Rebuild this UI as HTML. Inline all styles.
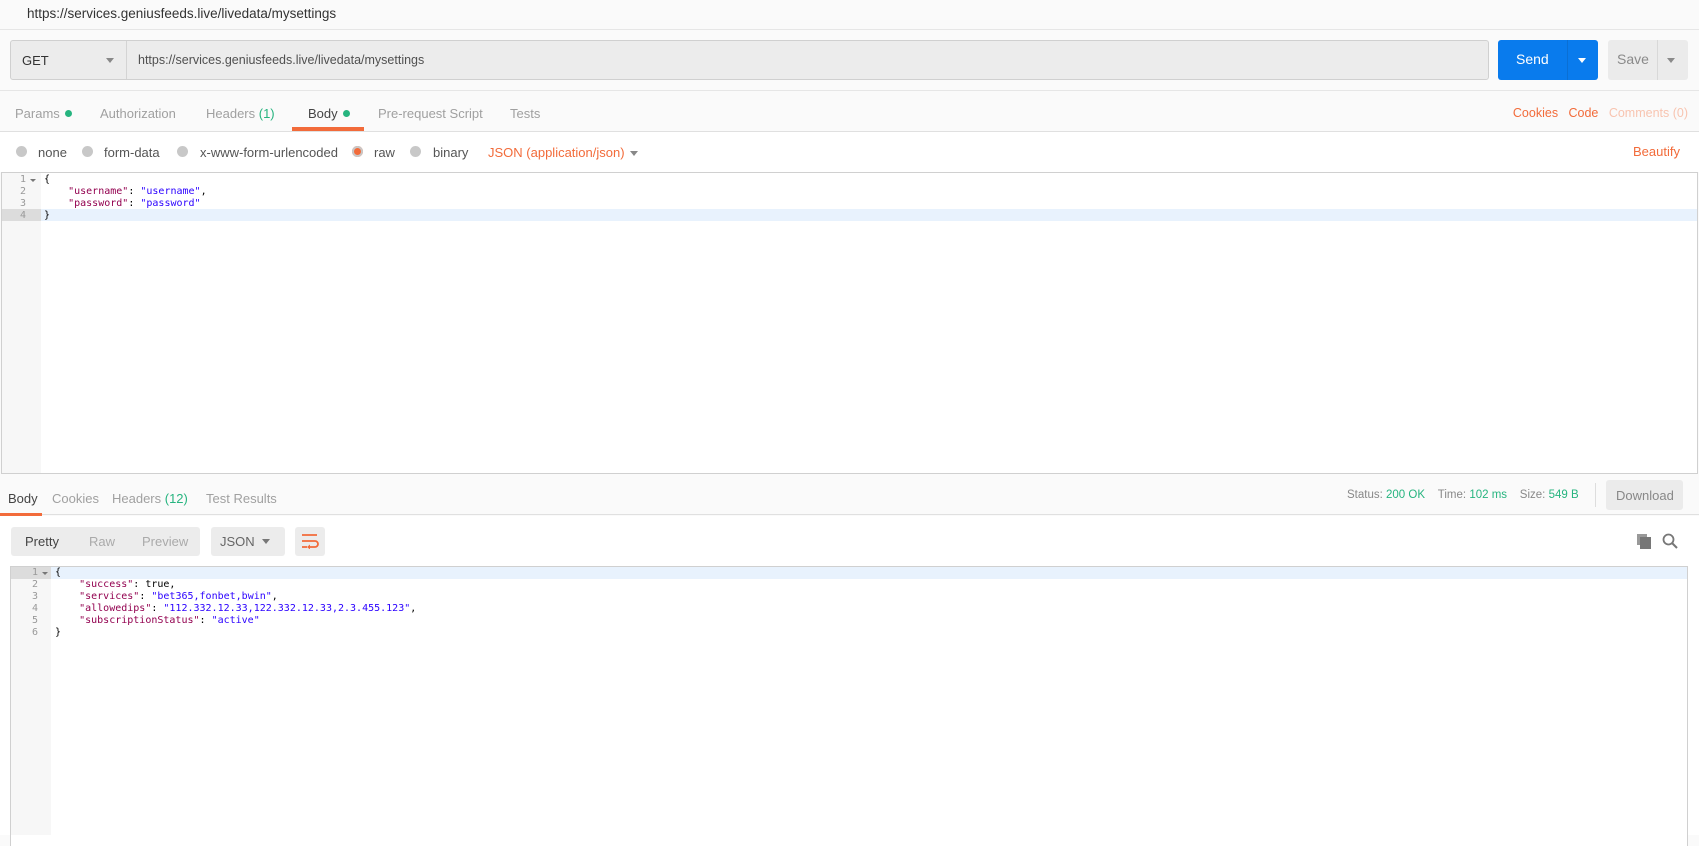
<!DOCTYPE html>
<html><head><meta charset="utf-8"><style>
*{box-sizing:border-box;margin:0;padding:0}
body{width:1699px;height:835px;overflow:hidden;background:#fafafa;font-family:"Liberation Sans",sans-serif;font-size:13px;color:#808080;position:relative}
.a{position:absolute;white-space:nowrap}
.g{color:#26b47f}
.o{color:#f26b3a}
.dot{display:inline-block;width:7px;height:7px;border-radius:50%;background:#26b47f;margin-left:5px;vertical-align:1px}
.radio{position:absolute;width:11px;height:11px;border-radius:50%;background:#c8c8c8;top:146px}
.code{font-family:"DejaVu Sans Mono","Liberation Mono",monospace;font-size:10px;line-height:12px;color:#000}
.k{color:#92004f}.s{color:#2a00ff}
.ln{font-family:"DejaVu Sans Mono",monospace;font-size:10px;line-height:12px;color:#999;text-align:right}
</style></head><body>
<div class="a" style="left:0;top:0;width:1699px;height:30px;background:#fafafa;border-bottom:1px solid #e6e6e6"></div>
<div class="a" style="left:27px;top:6px;font-size:13.5px;color:#333">https://services.geniusfeeds.live/livedata/mysettings</div>

<div class="a" style="left:10px;top:40px;width:1479px;height:40px;background:#ececec;border:1px solid #d0d0d0;border-radius:3px"></div>
<div class="a" style="left:126px;top:41px;width:1px;height:38px;background:#d4d4d4"></div>
<div class="a" style="left:22px;top:53px;font-size:13px;color:#333">GET</div>
<div class="a" style="left:106px;top:58px;width:0;height:0;border-left:4px solid transparent;border-right:4px solid transparent;border-top:5px solid #888"></div>
<div class="a" style="left:138px;top:53px;font-size:12.5px;color:#505050">https://services.geniusfeeds.live/livedata/mysettings</div>

<div class="a" style="left:1498px;top:40px;width:100px;height:40px;background:#097bed;border-radius:3px"></div>
<div class="a" style="left:1567px;top:40px;width:1px;height:40px;background:#0a6fd4"></div>
<div class="a" style="left:1516px;top:51px;font-size:14px;color:#fff">Send</div>
<div class="a" style="left:1578px;top:58px;border-left:4px solid transparent;border-right:4px solid transparent;border-top:5px solid #fff"></div>
<div class="a" style="left:1608px;top:40px;width:80px;height:40px;background:#ebebeb;border-radius:3px"></div>
<div class="a" style="left:1657px;top:40px;width:1px;height:40px;background:#d8d8d8"></div>
<div class="a" style="left:1617px;top:51px;font-size:14px;color:#8a8a8a">Save</div>
<div class="a" style="left:1667px;top:58px;border-left:4px solid transparent;border-right:4px solid transparent;border-top:5px solid #8a8a8a"></div>

<div class="a" style="left:0;top:90px;width:1699px;height:1px;background:#e6e6e6"></div>
<div class="a" style="left:15px;top:106px;color:#a0a0a0">Params<span class="dot"></span></div>
<div class="a" style="left:100px;top:106px;color:#a0a0a0">Authorization</div>
<div class="a" style="left:206px;top:106px;color:#a0a0a0">Headers <span class="g">(1)</span></div>
<div class="a" style="left:308px;top:106px;color:#444">Body<span class="dot"></span></div>
<div class="a" style="left:292px;top:127px;width:72px;height:4px;background:#f26b3a"></div>
<div class="a" style="left:378px;top:106px;color:#a0a0a0">Pre-request Script</div>
<div class="a" style="left:510px;top:106px;color:#a0a0a0">Tests</div>
<div class="a" style="right:11px;top:106px;font-size:12.5px"><span class="o">Cookies</span>&nbsp;&nbsp;&nbsp;<span class="o">Code</span>&nbsp;&nbsp;&nbsp;<span style="color:#f8c4b0">Comments (0)</span></div>
<div class="a" style="left:0;top:131px;width:1699px;height:1px;background:#e0e0e0"></div>
<div class="a" style="left:0;top:132px;width:1699px;height:40px;background:#fff"></div>

<div class="radio" style="left:16px"></div><div class="a" style="left:38px;top:145px;color:#555">none</div>
<div class="radio" style="left:82px"></div><div class="a" style="left:104px;top:145px;color:#555">form-data</div>
<div class="radio" style="left:177px"></div><div class="a" style="left:200px;top:145px;color:#555">x-www-form-urlencoded</div>
<div class="radio" style="left:352px;background:#f26b3a;box-shadow:inset 0 0 0 2px #c8c8c8"></div><div class="a" style="left:374px;top:145px;color:#555">raw</div>
<div class="radio" style="left:410px"></div><div class="a" style="left:433px;top:145px;color:#555">binary</div>
<div class="a o" style="left:488px;top:145px">JSON (application/json)</div>
<div class="a" style="left:630px;top:151px;border-left:4px solid transparent;border-right:4px solid transparent;border-top:5px solid #888"></div>
<div class="a o" style="left:1633px;top:144px">Beautify</div>

<div class="a" style="left:1px;top:172px;width:1697px;height:302px;background:#fff;border:1px solid #d0d0d0"></div>
<div class="a" style="left:2px;top:173px;width:39px;height:300px;background:#f7f7f7"></div>
<div class="a" style="left:41px;top:209px;width:1656px;height:12px;background:#e8f2fd"></div>
<div class="a" style="left:2px;top:209px;width:39px;height:12px;background:#dcdcdc"></div>
<div class="a ln" style="left:2px;top:174px;width:24px">1<br>2<br>3<br>4</div>
<div class="a" style="left:30px;top:179px;border-left:3px solid transparent;border-right:3px solid transparent;border-top:3px solid #777"></div>
<div class="a code" style="left:44px;top:174px">{<br>&nbsp;&nbsp;&nbsp;&nbsp;<span class="k">"username"</span>: <span class="s">"username"</span>,<br>&nbsp;&nbsp;&nbsp;&nbsp;<span class="k">"password"</span>: <span class="s">"password"</span><br>}</div>

<div class="a" style="left:0;top:475px;width:1699px;height:40px;background:#fafafa;border-bottom:1px solid #e0e0e0"></div>
<div class="a" style="left:8px;top:491px;color:#444">Body</div>
<div class="a" style="left:0;top:513px;width:42px;height:3px;background:#f26b3a"></div>
<div class="a" style="left:52px;top:491px;color:#a0a0a0">Cookies</div>
<div class="a" style="left:112px;top:491px;color:#a0a0a0">Headers <span class="g">(12)</span></div>
<div class="a" style="left:206px;top:491px;color:#a0a0a0">Test Results</div>
<div class="a" style="left:1347px;top:489px;font-size:11.5px;color:#888">Status:&nbsp;<span class="g">200 OK</span>&nbsp;&nbsp;&nbsp;&nbsp;Time:&nbsp;<span class="g">102 ms</span>&nbsp;&nbsp;&nbsp;&nbsp;Size:&nbsp;<span class="g">549 B</span></div>
<div class="a" style="left:1595px;top:483px;width:1px;height:24px;background:#ddd"></div>
<div class="a" style="left:1606px;top:480px;width:77px;height:30px;background:#ebebeb;border-radius:3px"></div>
<div class="a" style="left:1616px;top:488px;color:#888">Download</div>

<div class="a" style="left:0;top:516px;width:1699px;height:319px;background:#fff"></div>
<div class="a" style="left:11px;top:527px;width:189px;height:29px;background:#ececec;border-radius:3px"></div>
<div class="a" style="left:25px;top:534px;color:#444">Pretty</div>
<div class="a" style="left:89px;top:534px;color:#aaa">Raw</div>
<div class="a" style="left:142px;top:534px;color:#aaa">Preview</div>
<div class="a" style="left:211px;top:527px;width:74px;height:29px;background:#ececec;border-radius:3px"></div>
<div class="a" style="left:220px;top:534px;color:#666">JSON</div>
<div class="a" style="left:262px;top:539px;border-left:4px solid transparent;border-right:4px solid transparent;border-top:5px solid #777"></div>
<div class="a" style="left:295px;top:527px;width:30px;height:29px;background:#ececec;border-radius:3px"></div>
<svg class="a" style="left:301px;top:533px" width="18" height="16" viewBox="0 0 18 16"><path d="M1 2h15M1 8h13a3 3 0 0 1 0 6H9M1 14h5" stroke="#f26b3a" stroke-width="1.8" fill="none"/><path d="M9 11.5v5l-3-2.5z" fill="#f26b3a"/></svg>
<svg class="a" style="left:1637px;top:534px" width="16" height="16" viewBox="0 0 16 16"><rect x="0" y="0" width="10" height="11" fill="#999"/><rect x="3" y="3" width="11" height="12" fill="#777"/></svg>
<svg class="a" style="left:1662px;top:533px" width="16" height="16" viewBox="0 0 16 16"><circle cx="6.5" cy="6.5" r="5" stroke="#777" stroke-width="1.8" fill="none"/><path d="M10 10l5 5" stroke="#777" stroke-width="2"/></svg>

<div class="a" style="left:10px;top:566px;width:1678px;height:280px;border:1px solid #d0d0d0;border-bottom:none;background:#fff"></div>
<div class="a" style="left:11px;top:567px;width:40px;height:268px;background:#f7f7f7"></div>
<div class="a" style="left:51px;top:567px;width:1636px;height:12px;background:#e8f2fd"></div>
<div class="a" style="left:11px;top:567px;width:40px;height:12px;background:#dcdcdc"></div>
<div class="a ln" style="left:11px;top:567px;width:27px">1<br>2<br>3<br>4<br>5<br>6</div>
<div class="a" style="left:42px;top:572px;border-left:3px solid transparent;border-right:3px solid transparent;border-top:3px solid #777"></div>
<div class="a code" style="left:55px;top:567px">{<br>&nbsp;&nbsp;&nbsp;&nbsp;<span class="k">"success"</span>: true,<br>&nbsp;&nbsp;&nbsp;&nbsp;<span class="k">"services"</span>: <span class="s">"bet365,fonbet,bwin"</span>,<br>&nbsp;&nbsp;&nbsp;&nbsp;<span class="k">"allowedips"</span>: <span class="s">"112.332.12.33,122.332.12.33,2.3.455.123"</span>,<br>&nbsp;&nbsp;&nbsp;&nbsp;<span class="k">"subscriptionStatus"</span>: <span class="s">"active"</span><br>}</div>
</body></html>
